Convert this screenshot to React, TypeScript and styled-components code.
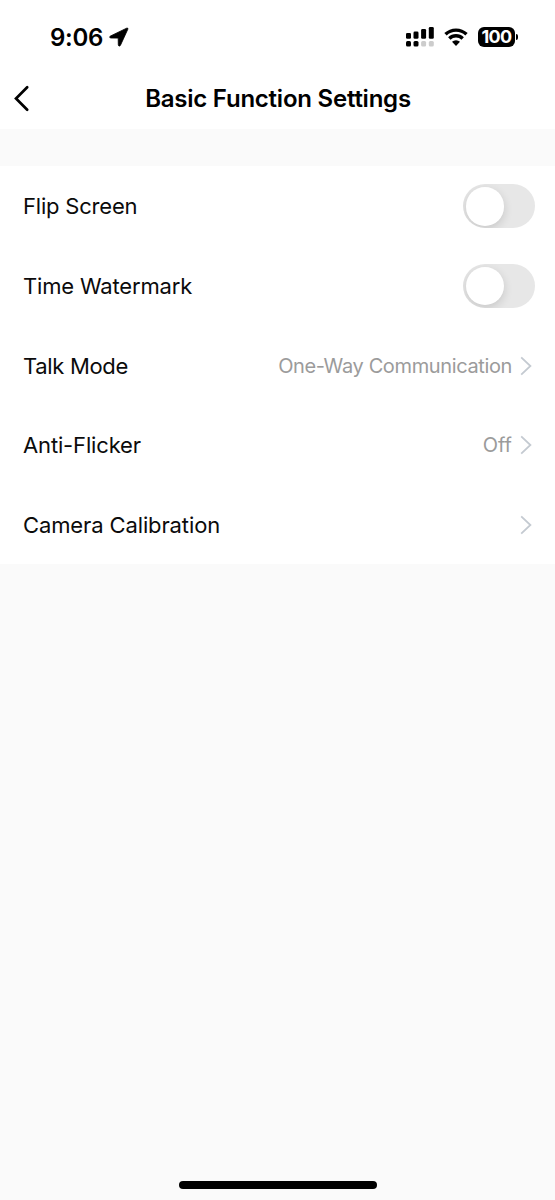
import styled, { createGlobalStyle } from 'styled-components'

const GlobalStyle = createGlobalStyle`
    * {
        box-sizing: border-box;
    }

    body {
        margin: 0;
        background: #fafafa;
        font-family: Inter, 'Liberation Sans', sans-serif;
        -webkit-font-smoothing: antialiased;
    }
`

const Screen = styled.div`
    display: flex;
    flex-direction: column;
    height: 1200px;
    width: 555px;
    background: #fafafa;
`

const StatusBar = styled.div`
    display: flex;
    align-items: center;
    justify-content: space-between;
    height: 68px;
    padding: 6px 37px 0 50px;
    background: #fff;
`

const StatusGroup = styled.div<{ $gap: number }>`
    display: flex;
    align-items: center;
    gap: ${(props) => props.$gap}px;
`

const Time = styled.span`
    width: 53px;
    padding-top: 2px;
    font-size: 24px;
    font-weight: 600;
    line-height: 30px;
    letter-spacing: -0.25px;
    white-space: nowrap;
    color: #000;
`

const Battery = styled.div`
    display: flex;
    align-items: center;
    gap: 1px;
`

const BatteryBody = styled.div`
    display: flex;
    align-items: center;
    justify-content: center;
    height: 20px;
    width: 37px;
    padding-bottom: 1px;
    border-radius: 6px;
    background: #000;
    color: #fff;
    font-size: 18px;
    font-weight: 700;
    line-height: 19px;
    letter-spacing: -0.7px;
`

const BatteryCap = styled.div`
    height: 6px;
    width: 2px;
    border-radius: 0 3px 3px 0;
    background: #000;
`

const NavBar = styled.header`
    display: grid;
    grid-template-columns: 60px 1fr 60px;
    align-items: center;
    height: 61px;
    background: #fff;
`

const BackButton = styled.button`
    display: flex;
    padding: 0 0 0 12.5px;
    border: none;
    background: none;
`

const Title = styled.h1`
    margin: 0;
    padding-left: 1px;
    font-size: 24px;
    font-weight: 600;
    line-height: 30px;
    letter-spacing: -0.23px;
    text-align: center;
    white-space: nowrap;
    color: #000;
`

const SettingsList = styled.main`
    display: flex;
    flex-direction: column;
    margin-top: 37.3px;
    background: #fff;
`

const Row = styled.div`
    display: flex;
    align-items: center;
    justify-content: space-between;
    height: 79.6px;
    padding: 0.6px 20px 0 23px;
`

const RowLabel = styled.span<{ $spacing?: number }>`
    font-size: 22px;
    line-height: 28px;
    letter-spacing: ${(props) => props.$spacing ?? 0}px;
    white-space: nowrap;
    color: #0b0b0b;
`

const RowEnd = styled.div`
    display: flex;
    align-items: center;
    gap: 8px;
    padding-right: 3px;
`

const RowValue = styled.span<{ $spacing?: number }>`
    font-size: 20px;
    line-height: 26px;
    letter-spacing: ${(props) => props.$spacing ?? 0}px;
    white-space: nowrap;
    color: #9b9b9b;
`

const Toggle = styled.button`
    display: flex;
    align-items: center;
    height: 44px;
    width: 72.5px;
    padding: 0 3px;
    border: none;
    border-radius: 22px;
    background: #e7e7e7;
    overflow: hidden;
`

const Knob = styled.span`
    height: 38.5px;
    width: 38.5px;
    border-radius: 50%;
    background: #fff;
    box-shadow: 0 3px 10px rgba(0, 0, 0, 0.14);
`

const HomeBar = styled.div`
    align-self: center;
    height: 7.5px;
    width: 198px;
    margin: auto 0 11.5px;
    border-radius: 4px;
    background: #000;
`

const LocationIcon = () => (
    <svg width="20" height="20" viewBox="0 0 20 20">
        <path
            d="M1.5 9 17.6 1.2c1-.4 1.6.2 1.2 1.1L11.4 18.4c-.6 1.1-2.1.8-2.1-.7l-.1-6.6-7.2-.1c-1.5 0-1.8-1.4-.5-2z"
            fill="#000"
            stroke="#000"
            strokeWidth="0.8"
            strokeLinejoin="round"
        />
    </svg>
)

const SignalIcon = () => (
    <svg width="28" height="20" viewBox="0 0 28 20">
        <rect x="0" y="6" width="5" height="5.8" rx="1.3" />
        <rect x="7.5" y="4.6" width="5" height="7.2" rx="1.3" />
        <rect x="15.1" y="2" width="5" height="9.8" rx="1.3" />
        <rect x="22.8" y="0" width="5" height="11.8" rx="1.3" />
        <rect x="0" y="14" width="5" height="5.6" rx="1.5" />
        <rect x="7.5" y="14" width="5" height="5.6" rx="1.5" />
        <rect x="15.1" y="14" width="5" height="5.6" rx="1.5" fill="#ccc" />
        <rect x="22.8" y="14" width="5" height="5.6" rx="1.5" fill="#ccc" />
    </svg>
)

const WifiIcon = () => (
    <svg width="24" height="18" viewBox="0 0 24 18" fill="none" stroke="#000">
        <path d="M1.5 6.3a15.2 15.2 0 0 1 21 0" strokeWidth="3.4" />
        <path d="M5.3 10.5a9.6 9.6 0 0 1 13.4 0" strokeWidth="3.4" />
        <path d="M12 17.9 8 13.8a5.8 5.8 0 0 1 8 0z" fill="#000" stroke="none" />
    </svg>
)

const BackIcon = () => (
    <svg width="17" height="27" viewBox="0 0 17 27">
        <path d="M14.2 2.2 3 13.5l11.2 11.3" fill="none" stroke="#000" strokeWidth="2.7" strokeLinecap="round" />
    </svg>
)

const ChevronIcon = () => (
    <svg width="12" height="20" viewBox="0 0 12 20">
        <path d="M1.2 1.3 10.4 10l-9.2 8.7" fill="none" stroke="#c4cad1" strokeWidth="1.8" />
    </svg>
)

type Setting = {
    label: string
    spacing?: number
    toggle?: boolean
    value?: string
    valueSpacing?: number
}

const settings: Setting[] = [
    { label: 'Flip Screen', spacing: -0.2, toggle: true },
    { label: 'Time Watermark', spacing: -0.17, toggle: true },
    { label: 'Talk Mode', spacing: -0.33, value: 'One-Way Communication', valueSpacing: -0.37 },
    { label: 'Anti-Flicker', spacing: -0.15, value: 'Off' },
    { label: 'Camera Calibration', spacing: -0.12 },
]

const SettingRow = ({ label, spacing, toggle, value, valueSpacing }: Setting) => {
    return (
        <Row>
            <RowLabel $spacing={spacing}>{label}</RowLabel>
            {toggle ? (
                <Toggle role="switch" aria-checked={false} aria-label={label}>
                    <Knob />
                </Toggle>
            ) : (
                <RowEnd>
                    {value && <RowValue $spacing={valueSpacing}>{value}</RowValue>}
                    <ChevronIcon />
                </RowEnd>
            )}
        </Row>
    )
}

const App = () => {
    return (
        <>
            <GlobalStyle />
            <Screen>
                <StatusBar>
                    <StatusGroup $gap={6}>
                        <Time>9:06</Time>
                        <LocationIcon />
                    </StatusGroup>
                    <StatusGroup $gap={10}>
                        <SignalIcon />
                        <WifiIcon />
                        <Battery>
                            <BatteryBody>100</BatteryBody>
                            <BatteryCap />
                        </Battery>
                    </StatusGroup>
                </StatusBar>
                <NavBar>
                    <BackButton aria-label="Back">
                        <BackIcon />
                    </BackButton>
                    <Title>Basic Function Settings</Title>
                </NavBar>
                <SettingsList>
                    {settings.map((setting) => (
                        <SettingRow key={setting.label} {...setting} />
                    ))}
                </SettingsList>
                <HomeBar />
            </Screen>
        </>
    )
}

export default App
